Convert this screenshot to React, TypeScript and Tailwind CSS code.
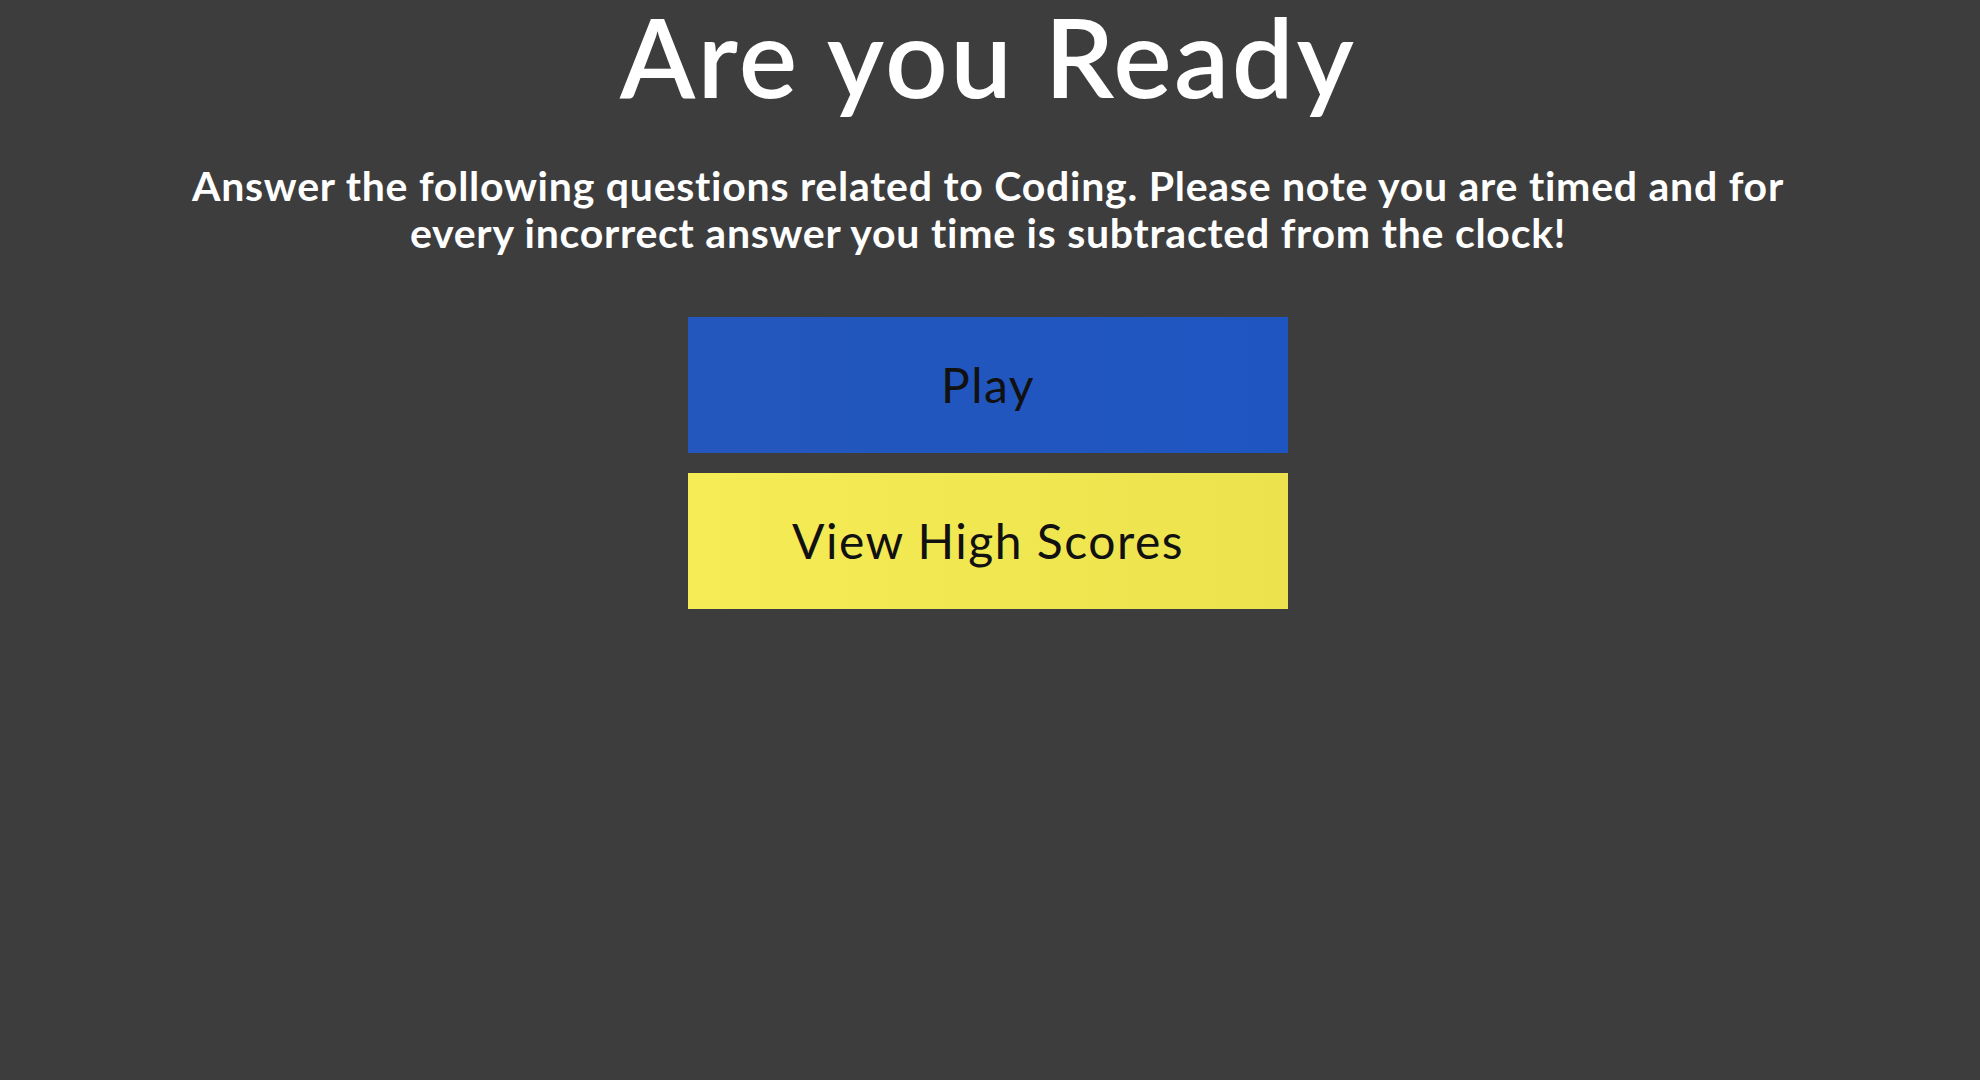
export default function App() {
  return (
    <div className="min-h-screen w-full bg-[#3d3d3d] pr-[4px] text-center text-white">
      <div className="flex flex-col items-center font-['Lato','Open_Sans',sans-serif]">
        <h1 className="mt-0 text-[110px] font-semibold leading-[110px] tracking-[2.5px]">
          Are you Ready
        </h1>

        <p className="mt-[52px] whitespace-nowrap text-[41px] font-bold leading-[47px] tracking-[0.75px]">
          Answer the following questions related to Coding. Please note you are timed and for
          <br />
          every incorrect answer you time is subtracted from the clock!
        </p>

        <div className="mt-[61px] flex w-[600px] flex-col gap-[20px]">
          <button className="flex h-[136px] w-full items-center justify-center bg-gradient-to-r from-[#2357bd] to-[#1f55c1] text-[48px] tracking-[1.5px] text-[#111111]">
            Play
          </button>
          <button className="flex h-[136px] w-full items-center justify-center bg-gradient-to-r from-[#f6ec55] to-[#ebe24d] text-[48px] tracking-[1.5px] text-[#111111]">
            View High Scores
          </button>
        </div>
      </div>
    </div>
  );
}
